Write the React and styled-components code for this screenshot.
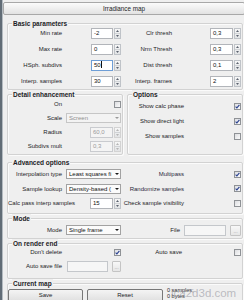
import React from 'react';
import styled, { createGlobalStyle } from 'styled-components';

const GlobalStyle = createGlobalStyle`
  html, body { margin: 0; padding: 0; background: #efefef; }
  body {
    font-family: "Liberation Sans", Arial, sans-serif;
    font-size: 6px;
    color: #1c1c26;
  }
`;

const Screen = styled.div`
  position: relative;
  width: 244px;
  height: 300px;
  overflow: hidden;
  display: flex;
  background: #efefef;
`;

const Edge = styled.div`
  flex: none;
  width: 3px;
  background: linear-gradient(to right, #616c76 0, #616c76 2px, #b4bbc1 2px);
`;

const Panel = styled.div`
  flex: 1;
  min-width: 0;
  display: flex;
  flex-direction: column;
  padding-left: 4px;
`;

const TitleBar = styled.div`
  flex: none;
  box-sizing: border-box;
  width: 242px;
  height: 13px;
  margin: 2px 0 0 -4px;
  border: 1px solid #a8a8a8;
  border-radius: 2px;
  background: linear-gradient(#fbfbfb, #e2e2e2);
  font-size: 6.3px;
  line-height: 11px;
  text-align: center;
`;

const Group = styled.div`
  position: relative;
  box-sizing: border-box;
  flex: none;
  width: ${(p) => p.$w || 236}px;
  height: ${(p) => p.$h}px;
  margin-top: ${(p) => p.$top || 0}px;
  padding-top: ${(p) => p.$pad || 0}px;
  border: 1px solid #d2d2d2;
  border-radius: 2px;
  box-shadow: inset 1px 1px 0 #fbfbfb, 1px 1px 0 #fbfbfb;
`;

const Pair = styled.div`
  display: flex;
  gap: 4px;
  margin-top: ${(p) => p.$top || 0}px;
`;

const Legend = styled.div`
  position: absolute;
  top: -5px;
  left: 4px;
  padding: 0 1px;
  background: #efefef;
  font-size: 6.5px;
  font-weight: bold;
  line-height: 9px;
  white-space: nowrap;
`;

const Grid = styled.div`
  display: grid;
  grid-template-columns: ${(p) => p.$cols};
  grid-auto-rows: 14px;
  row-gap: ${(p) => p.$gap || 0}px;
  align-items: center;
`;

const Label = styled.span`
  justify-self: ${(p) => (p.$left ? 'start' : 'end')};
  white-space: nowrap;
  color: ${(p) => (p.$dim ? '#2a2a3c' : 'inherit')};
`;

const Empty = styled.span``;

/* spinner field */
const SpinBox = styled.div`
  justify-self: end;
  display: flex;
  gap: 1px;
  width: ${(p) => p.$w}px;
  height: 11px;
`;

const SpinField = styled.div`
  position: relative;
  flex: 1;
  box-sizing: border-box;
  padding-left: 2px;
  border: 1px solid ${(p) => (p.$focus ? '#6e9ed6' : p.$disabled ? '#c9cbcf' : '#b2b5ba')};
  background: ${(p) => (p.$disabled ? '#f4f4f4' : '#ffffff')};
  color: ${(p) => (p.$disabled ? '#9a9a9a' : '#111')};
  line-height: 9px;
  white-space: nowrap;
`;

const Caret = styled.span`
  display: inline-block;
  width: 1px;
  height: 7px;
  margin-left: 0.5px;
  vertical-align: -1px;
  background: #111;
`;

const SpinArrows = styled.div`
  flex: none;
  box-sizing: border-box;
  width: 7px;
  display: flex;
  flex-direction: column;
  border: 1px solid ${(p) => (p.$disabled ? '#d3d3d3' : '#bfc3c8')};
  background: linear-gradient(#f7f7f7, #e2e4e6);
`;

const ArrowCell = styled.div`
  flex: 1;
  display: flex;
  align-items: center;
  justify-content: center;
  & + & { border-top: 1px solid #d0d3d6; }
`;

const Tri = ({ up, disabled }) => (
  <svg width="3" height="2" viewBox="0 0 3 2">
    <path d={up ? 'M0 2 L1.5 0 L3 2z' : 'M0 0 L3 0 L1.5 2z'} fill={disabled ? '#b5b5b5' : '#5d6470'} />
  </svg>
);

const Spinner = ({ value, w = 30, disabled, focus }) => (
  <SpinBox $w={w}>
    <SpinField $disabled={disabled} $focus={focus}>
      {value}
      {focus && <Caret />}
    </SpinField>
    <SpinArrows $disabled={disabled}>
      <ArrowCell><Tri up disabled={disabled} /></ArrowCell>
      <ArrowCell><Tri disabled={disabled} /></ArrowCell>
    </SpinArrows>
  </SpinBox>
);

/* checkbox */
const Box = styled.div`
  justify-self: end;
  box-sizing: border-box;
  width: 7px;
  height: 7px;
  border: 1px solid #8f9296;
  background: linear-gradient(135deg, #dcdde0, #fbfbfb);
  display: flex;
  align-items: center;
  justify-content: center;
`;

const Check = ({ on }) => (
  <Box>
    {on && (
      <svg width="5" height="5" viewBox="0 0 5 5">
        <path d="M0.6 2.6 L1.9 3.9 L4.4 0.8" fill="none" stroke="#2c4391" strokeWidth="1.1" />
      </svg>
    )}
  </Box>
);

/* dropdown */
const SelectBox = styled.div`
  justify-self: end;
  box-sizing: border-box;
  display: flex;
  align-items: center;
  width: ${(p) => p.$w}px;
  height: 10px;
  padding-left: 2px;
  border: 1px solid ${(p) => (p.$disabled ? '#c6c6c6' : '#a2a2a2')};
  background: ${(p) => (p.$disabled ? '#f3f3f3' : '#fbfbfb')};
  color: ${(p) => (p.$disabled ? '#909090' : '#111')};
`;

const SelectText = styled.span`
  flex: 1;
  min-width: 0;
  white-space: nowrap;
  line-height: 8px;
`;

const Select = ({ value, w = 55, disabled }) => (
  <SelectBox $w={w} $disabled={disabled}>
    <SelectText>{value}</SelectText>
    <svg width="6" height="8" viewBox="0 0 6 8">
      <path d="M1 3 H5 L3 5z" fill={disabled ? '#9a9a9a' : '#1a1a1a'} />
    </svg>
  </SelectBox>
);

/* file field */
const FileRow = styled.div`
  justify-self: end;
  display: flex;
  gap: 4px;
  height: 11px;
`;

const FileField = styled.div`
  box-sizing: border-box;
  width: ${(p) => p.$w}px;
  height: 11px;
  border: 1px solid #c4c7cb;
  background: #f6f6f6;
`;

const Dots = styled.div`
  box-sizing: border-box;
  width: ${(p) => p.$w}px;
  height: 11px;
  border: 1px solid #c4c4c4;
  border-radius: 1px;
  background: linear-gradient(#f8f8f8, #e6e6e6);
  color: #9a9a9a;
  font-size: 5px;
  line-height: 10px;
  text-align: center;
`;

/* bottom buttons */
const ButtonRow = styled.div`
  display: flex;
  gap: 4px;
  align-items: flex-start;
`;

const Button = styled.div`
  flex: none;
  box-sizing: border-box;
  width: ${(p) => p.$w}px;
  height: 14px;
  border: 1px solid #777;
  border-radius: 2px;
  background: linear-gradient(#f4f4f4, #dedede);
  line-height: 10px;
  text-align: center;
`;

const Stats = styled.div`
  margin-top: -2px;
  font-size: 5.5px;
  line-height: 6px;
  color: #2a2a2a;
`;

const Watermark = styled.div`
  position: absolute;
  left: 171px;
  top: 287px;
  font-size: 11.5px;
  line-height: 12px;
  color: rgba(150, 150, 160, 0.6);
  white-space: nowrap;
`;

export default function App() {
  return (
    <Screen>
      <GlobalStyle />
      <Edge />
      <Panel>
        <TitleBar>Irradiance map</TitleBar>

        <Group $top={8} $h={67} $pad={2}>
          <Legend>Basic parameters</Legend>
          <Grid $cols="54px 59px 51px 69px" $gap={2}>
            <Label>Min rate</Label>
            <Spinner value="-2" />
            <Label>Clr thresh</Label>
            <Spinner value="0,3" w={31} />

            <Label>Max rate</Label>
            <Spinner value="0" />
            <Label>Nrm Thresh</Label>
            <Spinner value="0,3" w={31} />

            <Label>HSph. subdivs</Label>
            <Spinner value="50" focus />
            <Label>Dist thresh</Label>
            <Spinner value="0,1" w={31} />

            <Label>Interp. samples</Label>
            <Spinner value="30" />
            <Label>Interp. frames</Label>
            <Spinner value="2" w={31} />
          </Grid>
        </Group>

        <Pair $top={4}>
          <Group $w={116} $h={61} $pad={2}>
            <Legend>Detail enhancement</Legend>
            <Grid $cols="54px 59px">
              <Label>On</Label>
              <Check />
              <Label>Scale</Label>
              <Select value="Screen" disabled />
              <Label>Radius</Label>
              <Spinner value="60,0" w={31} disabled />
              <Label>Subdivs mult</Label>
              <Spinner value="0,3" w={31} disabled />
            </Grid>
          </Group>
          <Group $w={116} $h={61} $pad={4}>
            <Legend>Options</Legend>
            <Grid $cols="56px 57px" $gap={1}>
              <Label>Show calc phase</Label>
              <Check on />
              <Label>Show direct light</Label>
              <Check on />
              <Label>Show samples</Label>
              <Check />
            </Grid>
          </Group>
        </Pair>

        <Group $top={7} $h={52} $pad={4}>
          <Legend>Advanced options</Legend>
          <Grid $cols="54px 59px 63px 57px" $gap={0.5}>
            <Label>Interpolation type</Label>
            <Select value="Least squares fi" />
            <Label $dim>Multipass</Label>
            <Check on />

            <Label>Sample lookup</Label>
            <Select value="Density-based (" />
            <Label $dim>Randomize samples</Label>
            <Check on />

            <Label $left>Calc pass interp samples</Label>
            <Spinner value="15" w={31} />
            <Label>Check sample visibility</Label>
            <Check />
          </Grid>
        </Group>

        <Group $top={4} $h={21} $pad={4}>
          <Legend>Mode</Legend>
          <Grid $cols="54px 59px 59px 61px">
            <Label>Mode</Label>
            <Select value="Single frame" />
            <Label>File</Label>
            <FileRow>
              <FileField $w={42} />
              <Dots $w={11}>...</Dots>
            </FileRow>
          </Grid>
        </Group>

        <Group $top={4} $h={36} $pad={1}>
          <Legend>On render end</Legend>
          <Grid $cols="54px 59px 61px 59px">
            <Label>Don't delete</Label>
            <Check on />
            <Label>Auto save</Label>
            <Check />

            <Label>Auto save file</Label>
            <FileRow>
              <FileField $w={41} />
              <Dots $w={9}>...</Dots>
            </FileRow>
            <Empty />
            <Empty />
          </Grid>
        </Group>

        <Group $top={4} $h={30} $pad={5}>
          <Legend>Current map</Legend>
          <ButtonRow>
            <Button $w={75}>Save</Button>
            <Button $w={76}>Reset</Button>
            <Stats>
              0 samples;
              <br />
              0 bytes
            </Stats>
          </ButtonRow>
        </Group>
      </Panel>
      <Watermark>ica2d3d.com</Watermark>
    </Screen>
  );
}
